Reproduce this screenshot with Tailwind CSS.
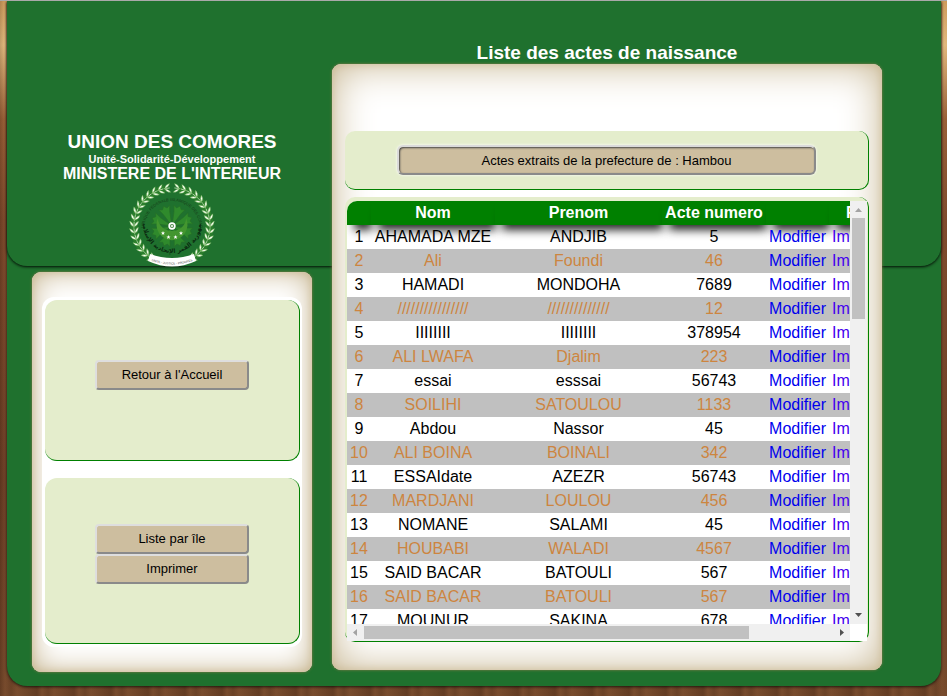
<!DOCTYPE html>
<html lang="fr">
<head>
<meta charset="utf-8">
<title>Liste des actes de naissance</title>
<script src="https://cdn.jsdelivr.net/npm/@tailwindcss/browser@4"></script>
</head>
<body class="min-h-screen border-t border-[#a9a9a9] bg-[#6f4327] bg-[repeating-linear-gradient(90deg,rgba(40,15,5,0.22)_0px,rgba(150,95,60,0.12)_5px,rgba(40,15,5,0.12)_11px,rgba(150,95,60,0.15)_17px,rgba(40,15,5,0.1)_29px,rgba(40,15,5,0.22)_37px),linear-gradient(180deg,#d9a662_0px,#efc888_45px,#9b6238_120px,#7d4a2c_220px,#6b3f26_480px,#74492b_100%)] pr-[6px] pb-[10px] pl-[7px] font-['Liberation_Sans',Arial,sans-serif]">
<div class="relative grid grid-cols-[280fr_550fr] gap-x-5 rounded-b-[20px] bg-[#1f712e] pr-[59px] pb-[14px] pl-[25px] shadow-[0_1px_3px_rgba(0,0,0,0.7)]">
  <div class="absolute inset-x-0 top-0 h-[265px] rounded-b-[20px] shadow-[0_1px_3px_rgba(0,0,0,0.9)]"></div>

  <aside class="relative flex flex-col">
    <header class="flex h-[271px] flex-col items-center pt-[130px] text-center font-bold text-white">
      <h1 class="text-[19px] leading-[22px]">UNION DES COMORES</h1>
      <p class="text-[11px] leading-[12px]">Unité-Solidarité-Développement</p>
      <h2 class="text-[16px] leading-[18px]">MINISTERE DE L'INTERIEUR</h2>
      <svg id="emblem" class="h-[86px] w-[86px]" viewBox="-43 -43 86 86" role="img" aria-label="Emblème des Comores">
        <defs>
          <path id="arcTop" d="M-28 3A28 28 0 1 1 28 3"/>
          <path id="arcBottom" d="M-29-2A29 29 0 0 0 29-2"/>
          <path id="arcBanner" d="M-23 34Q0 43 23 34"/>
          <g id="sprig"><path d="M0 3V-3" stroke="#d9efc9" stroke-width=".7"/><path d="M0 2Q-4 1-4.500-3.500Q-1-2 0 2ZM0 2Q4 1 4.500-3.500Q1-2 0 2Z" fill="#fbfff4" stroke="#4fa238" stroke-width=".4"/></g>
        </defs>
        <g fill="none" stroke="#35892c" stroke-width="7" opacity=".55"><path d="M-7-37.300A38 38 0 0 0-22 31"/><path d="M7-37.300A38 38 0 0 1 22 31"/></g>
        <g id="wreath"></g>
        <g id="rays" fill="#2f8a2c" stroke="#256f27" stroke-width=".6"></g>
        <path d="M-14-8A15.500 15.500 0 1 0 14-8A14 13 0 1 1-14-8Z" fill="#43962f"/>
        <circle r="3.700" fill="#fff"/><circle r="2" fill="#4f8c4a"/><circle r="1" fill="#fff"/>
        <g id="stars" fill="#fff"></g>
        <text class="fill-[#153d1a] text-[4px] font-normal"><textPath href="#arcTop" startOffset="50%" text-anchor="middle">REPUBLIQUE FEDERALE ISLAMIQUE DES COMORES</textPath></text>
        <path d="M-22 28Q0 36 22 28L24 35Q0 46-24 35Z" fill="#fff"/>
        <text class="fill-[#0b2a10] text-[6px] font-bold" font-family="DejaVu Sans"><textPath href="#arcBottom" startOffset="50%" text-anchor="middle">جمهورية القمر الإتحادية الإسلامية</textPath></text>
        <text class="fill-[#444] text-[3px] font-normal"><textPath href="#arcBanner" startOffset="50%" text-anchor="middle">UNITE - JUSTICE - PROGRES</textPath></text>
      </svg>
    </header>
    <div class="flex-none rounded-[9px] bg-white px-[10px] pt-[25px] pb-[25px] shadow-[inset_0_0_30px_#c4b28c,inset_0_0_8px_#d8c9a8,0_0_3px_#8a7a4a]">
      <div class="flex flex-col gap-[17px] rounded-xl bg-white p-[3px] pr-[2px]">
        <section class="flex h-[161px] flex-col items-center justify-center rounded-xl border-r border-b border-[green] bg-[#e4edcc] pb-[10px]">
          <button type="button" class="h-[30px] w-[154px] rounded border-2 border-t-[#dedede] border-l-[#dedede] border-r-[#8a8a8a] border-b-[#8a8a8a] bg-[#cdbe9f] text-[13px] text-black">Retour à l'Accueil</button>
        </section>
        <nav class="flex h-[166px] flex-col items-center justify-center rounded-xl border-r border-b border-[green] bg-[#e4edcc] pb-[14px]">
          <button type="button" class="h-[30px] w-[154px] rounded border-2 border-t-[#dedede] border-l-[#dedede] border-r-[#8a8a8a] border-b-[#8a8a8a] bg-[#cdbe9f] text-[13px] text-black">Liste par île</button>
          <button type="button" class="h-[30px] w-[154px] rounded border-2 border-t-[#dedede] border-l-[#dedede] border-r-[#8a8a8a] border-b-[#8a8a8a] bg-[#cdbe9f] text-[13px] text-black">Imprimer</button>
        </nav>
      </div>
    </div>
  </aside>

  <main class="relative flex min-w-0 flex-col">
    <h2 class="pt-10 text-center text-[19px] leading-[23px] font-bold text-white">Liste des actes de naissance</h2>
    <div class="flex flex-none flex-col gap-[7px] rounded-[9px] bg-white px-[13px] pt-[67px] pb-[28px] shadow-[inset_0_0_40px_#c4b28c,inset_0_0_8px_#d8c9a8,0_0_3px_#8a7a4a]">
      <div class="flex h-[59px] items-center justify-center rounded-[10px] border-r border-b border-[green] bg-[#e4edcc]">
        <input type="text" readonly aria-label="Préfecture" value="Actes extraits de la prefecture de : Hambou" class="h-[30px] w-4/5 rounded-md border-2 border-t-[#dadada] border-l-[#dadada] border-r-[#8a8a8a] border-b-[#8a8a8a] bg-[#cdbe9f] text-center text-[13px] text-black shadow-[inset_1px_1px_2px_#444,0_0_3px_#fff]">
      </div>
      <div class="rounded-[10px] border-r border-b border-[green] bg-[#e4edcc] pt-1 pr-px pl-[2px]">
        <div class="grid grid-cols-[minmax(0,1fr)_17px] grid-rows-[423px_17px] rounded-tl-[10px] bg-[#f0f0f0]">
          <div class="overflow-hidden rounded-tl-[10px] bg-white">
            <table class="w-[613px] table-fixed border-separate border-spacing-0 text-center text-[16px] leading-[24px]">
              <colgroup><col class="w-[24px]"><col class="w-[124px]"><col class="w-[167px]"><col class="w-[104px]"><col class="w-[63px]"><col class="w-[67px]"><col class="w-[64px]"></colgroup>
              <thead class="text-white">
                <tr class="h-6">
                  <th class="relative bg-[green] p-0 shadow-[4px_8px_10px_-3px_rgba(0,0,0,0.85)]"></th>
                  <th class="relative bg-[green] p-0 shadow-[4px_8px_10px_-3px_rgba(0,0,0,0.85)]">Nom</th>
                  <th class="relative bg-[green] p-0 shadow-[4px_8px_10px_-3px_rgba(0,0,0,0.85)]">Prenom</th>
                  <th class="relative bg-[green] p-0 whitespace-nowrap shadow-[4px_8px_10px_-3px_rgba(0,0,0,0.85)]">Acte numero</th>
                  <th class="relative bg-[green] p-0 shadow-[4px_8px_10px_-3px_rgba(0,0,0,0.85)]"></th>
                  <th class="relative bg-[green] p-0 pl-[17px] text-left shadow-[4px_8px_10px_-3px_rgba(0,0,0,0.85)]">Fiche</th>
                  <th class="relative bg-[green] p-0 shadow-[4px_8px_10px_-3px_rgba(0,0,0,0.85)]"></th>
                </tr>
              </thead>
              <tbody id="rows"></tbody>
            </table>
          </div>
          <div class="flex flex-col items-center" aria-hidden="true">
            <svg class="h-[17px] w-[17px]" viewBox="0 0 17 17"><path d="M5 11L8.500 7L12 11Z" fill="#a3a3a3"/></svg>
            <div class="h-[101px] w-[13px] bg-[#c1c1c1]"></div>
            <svg class="mt-auto h-[17px] w-[17px]" viewBox="0 0 17 17"><path d="M5 6L8.500 10L12 6Z" fill="#505050"/></svg>
          </div>
          <div class="flex items-center" aria-hidden="true">
            <svg class="h-[17px] w-[17px]" viewBox="0 0 17 17"><path d="M10 5L6 8.500L10 12Z" fill="#a3a3a3"/></svg>
            <div class="flex-1"><div class="h-[13px] w-[82%] bg-[#c1c1c1]"></div></div>
            <svg class="h-[17px] w-[17px]" viewBox="0 0 17 17"><path d="M7 5L11 8.500L7 12Z" fill="#505050"/></svg>
          </div>
          <div class="bg-white"></div>
        </div>
      </div>
    </div>
  </main>
</div>
<script>
const rows = [
  ["AHAMADA MZE","ANDJIB","5"],["Ali","Foundi","46"],["HAMADI","MONDOHA","7689"],
  ["////////////////","//////////////","12"],["IIIIIIII","IIIIIIII","378954"],["ALI LWAFA","Djalim","223"],
  ["essai","esssai","56743"],["SOILIHI","SATOULOU","1133"],["Abdou","Nassor","45"],
  ["ALI BOINA","BOINALI","342"],["ESSAIdate","AZEZR","56743"],["MARDJANI","LOULOU","456"],
  ["NOMANE","SALAMI","45"],["HOUBABI","WALADI","4567"],["SAID BACAR","BATOULI","567"],
  ["SAID BACAR","BATOULI","567"],["MOUNUR","SAKINA","678"]
];
const cell = (text) => `<td class="p-0 whitespace-nowrap"><span class="relative z-10">${text}</span></td>`;
document.getElementById("rows").innerHTML = rows.map((r, i) => `
  <tr class="h-6 text-black even:bg-[#c0c0c0] even:text-[#cd853f]">
    ${[i + 1, ...r].map(cell).join("")}
    <td class="p-0"><a href="#" class="relative z-10 text-[#0000ee]">Modifier</a></td>
    <td class="p-0 pl-[3px] text-left"><a href="#" class="relative z-10 text-[#4400ee]">Imprimer</a></td><td class="p-0"></td>
  </tr>`).join("");

let wreath = "";
for (let a = 8; a <= 148; a += 10) {
  wreath += `<use href="#sprig" transform="rotate(${a}) translate(0,-38) rotate(-90)"/>`;
  wreath += `<use href="#sprig" transform="rotate(${-a}) translate(0,-38) rotate(90)"/>`;
}
document.getElementById("wreath").innerHTML = wreath;
let rays = "";
for (let a = 22; a < 360; a += 45) rays += `<path transform="rotate(${a})" d="M-1-4L-3.500-14L-6-20L-2.500-18.500L0-21.500L2.500-18.500L6-20L3.500-14L1-4Z"/>`;
document.getElementById("rays").innerHTML = rays;
document.getElementById("stars").innerHTML = [[-9,7],[-3.5,11],[3.5,11],[9,7]]
  .map(([x, y]) => `<path transform="translate(${x},${y})" d="M0-2L.6-.6L2-.5L.9.500L1.300 2L0 1.100L-1.300 2L-.9.500L-2-.5L-.6-.6Z"/>`).join("");
</script>
</body>
</html>
